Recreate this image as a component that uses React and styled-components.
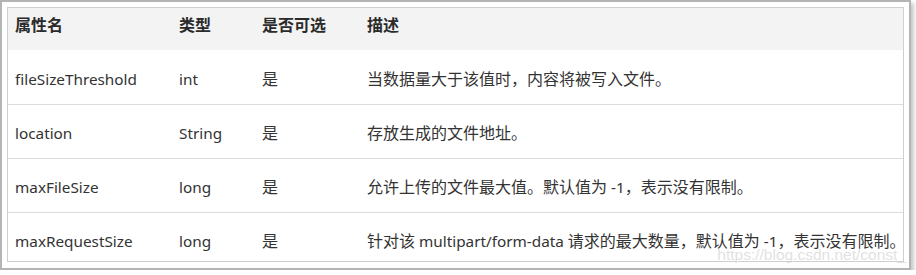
import React from "react";
import styled, { createGlobalStyle } from "styled-components";

const Global = createGlobalStyle`
  html, body { margin: 0; padding: 0; background: #ffffff; }
  body { font-family: "Noto Sans", "Noto Sans CJK SC", sans-serif; color: #333; }
`;

const Frame = styled.div`
  position: relative;
  box-sizing: border-box;
  width: 911px;
  height: 270px;
  border: 2px solid #b4b4b4;
  padding: 5px 5px 6px 5px;
  background: #fff;
  box-shadow: 3px 3px 4px rgba(0, 0, 0, 0.22);
`;

const Table = styled.div`
  border: 1px solid #cfcfcf;
  display: flex;
  flex-direction: column;
`;

const Row = styled.div`
  display: grid;
  grid-template-columns: 164px 83px 105px 1fr;
  box-sizing: border-box;
  height: ${(p) => p.$h}px;
  background: ${(p) => (p.$head ? "#f3f3f3" : "#fff")};
  border-top: ${(p) => (p.$head ? "none" : p.$first ? "1px solid #fff" : "1px solid #dcdcdc")};
`;

const Cell = styled.div`
  padding: ${(p) => (p.$head ? 7 : 18)}px 0 0 7px;
  font-size: 16px;
  line-height: 20px;
  font-weight: ${(p) => (p.$head ? 700 : 400)};
  color: ${(p) => (p.$head ? "#2b2b2b" : "#333")};
  white-space: nowrap;
`;

const Latin = styled.span`
  font-family: "Noto Sans", sans-serif;
  font-size: 15.3px;
`;

const Watermark = styled.div`
  position: absolute;
  right: 3px;
  bottom: 4px;
  font-family: "Liberation Sans", Arial, sans-serif;
  font-size: 15.5px;
  line-height: 18px;
  color: rgba(195, 195, 195, 0.5);
  text-shadow: 1px 1px 0 rgba(255, 255, 255, 0.7);
  pointer-events: none;
`;

const rows = [
  ["fileSizeThreshold", "int", "是", "当数据量大于该值时，内容将被写入文件。"],
  ["location", "String", "是", "存放生成的文件地址。"],
  ["maxFileSize", "long", "是", "允许上传的文件最大值。默认值为 -1，表示没有限制。"],
  ["maxRequestSize", "long", "是", "针对该 multipart/form-data 请求的最大数量，默认值为 -1，表示没有限制。"],
];

function Mixed({ text }) {
  const parts = text.split(/([\u0000-\u024f]+)/).filter(Boolean);
  return parts.map((p, i) =>
    /^[\u0000-\u024f]+$/.test(p) ? <Latin key={i}>{p}</Latin> : <React.Fragment key={i}>{p}</React.Fragment>
  );
}

export default function App() {
  return (
    <>
      <Global />
      <Frame>
        <Table>
          <Row $head $h={42}>
            <Cell $head>属性名</Cell>
            <Cell $head>类型</Cell>
            <Cell $head>是否可选</Cell>
            <Cell $head>描述</Cell>
          </Row>
          {rows.map((r, i) => (
            <Row key={r[0]} $first={i === 0} $h={i === rows.length - 1 ? 49 : 54}>
              {r.map((c, j) => (
                <Cell key={j}>
                  <Mixed text={c} />
                </Cell>
              ))}
            </Row>
          ))}
        </Table>
        <Watermark>https://blog.csdn.net/const_</Watermark>
      </Frame>
    </>
  );
}
